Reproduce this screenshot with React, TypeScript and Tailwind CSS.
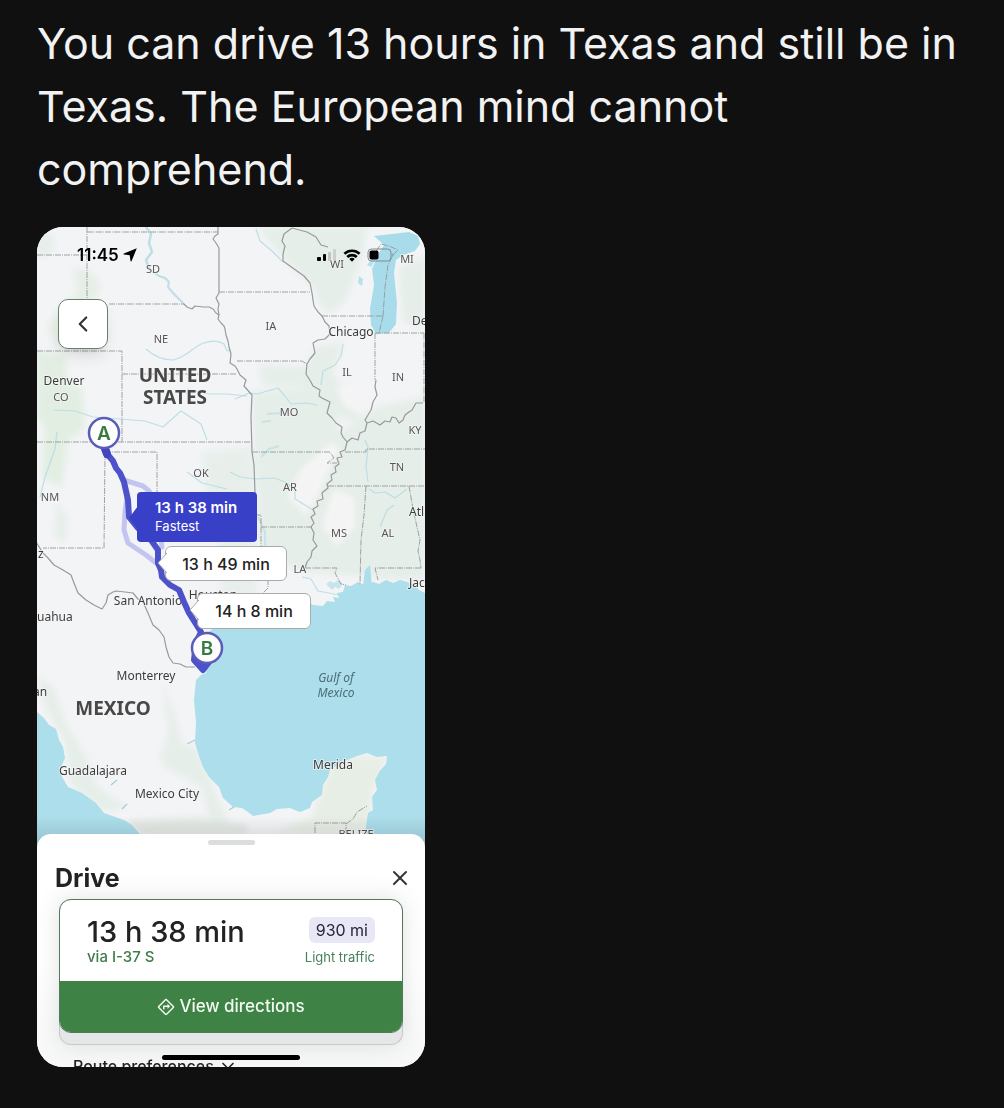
import { ChevronDown, ChevronLeft, X } from "lucide-react";
import { MdOutlineDirections } from "react-icons/md";

type Label = { x: number; y: number; text: string; kind?: "state" | "country" | "sea" | "edge" };

const labels: Label[] = [
  { x: 116, y: 46, text: "SD", kind: "state" },
  { x: 124, y: 116, text: "NE", kind: "state" },
  { x: 300, y: 41, text: "WI", kind: "state" },
  { x: 370, y: 36, text: "MI", kind: "state" },
  { x: 234, y: 103, text: "IA", kind: "state" },
  { x: 310, y: 149, text: "IL", kind: "state" },
  { x: 361, y: 154, text: "IN", kind: "state" },
  { x: 24, y: 174, text: "CO", kind: "state" },
  { x: 252, y: 189, text: "MO", kind: "state" },
  { x: 378, y: 207, text: "KY", kind: "state" },
  { x: 164, y: 250, text: "OK", kind: "state" },
  { x: 360, y: 244, text: "TN", kind: "state" },
  { x: 253, y: 264, text: "AR", kind: "state" },
  { x: 13, y: 274, text: "NM", kind: "state" },
  { x: 302, y: 310, text: "MS", kind: "state" },
  { x: 351, y: 310, text: "AL", kind: "state" },
  { x: 263, y: 346, text: "LA", kind: "state" },
  { x: 319, y: 611, text: "BELIZE", kind: "state" },
  { x: 138, y: 155, text: "UNITED", kind: "country" },
  { x: 138, y: 177, text: "STATES", kind: "country" },
  { x: 76, y: 488, text: "MEXICO", kind: "country" },
  { x: 299, y: 455, text: "Gulf of", kind: "sea" },
  { x: 299, y: 470, text: "Mexico", kind: "sea" },
  { x: 27, y: 158, text: "Denver" },
  { x: 314, y: 109, text: "Chicago" },
  { x: 111, y: 378, text: "San Antonio" },
  { x: 176, y: 372, text: "Houston" },
  { x: 109, y: 453, text: "Monterrey" },
  { x: 56, y: 548, text: "Guadalajara" },
  { x: 130, y: 571, text: "Mexico City" },
  { x: 296, y: 542, text: "Merida" },
  { x: 375, y: 98, text: "De", kind: "edge" },
  { x: 372, y: 289, text: "Atl", kind: "edge" },
  { x: 372, y: 360, text: "Jac", kind: "edge" },
  { x: 1, y: 331, text: "z", kind: "edge" },
  { x: 0, y: 394, text: "uahua", kind: "edge" },
  { x: -4, y: 469, text: "an", kind: "edge" },
];

const labelStyles = {
  city: "fill-[#3c3c3c] text-[12px]",
  edge: "fill-[#3c3c3c] text-[12px]",
  state: "fill-[#555] text-[11px]",
  country: "fill-[#484848] text-[19px] font-bold",
  sea: "fill-[#4d6d78] text-[12px] italic",
};

const borders = [
  "M50 5H181M50 0V72M0 28H50M72 77H147M182 65H273M0 124H85V215M85 147H200M0 215H215",
  "M68 225H120V265M68 225L67 321H6M285 89H346M338 106H387M338 106V153M387 106V176",
  "M200 134H265L270 137M215 225H293L297 231L290 236H300M308 225H329V222H388M291 259H388",
  "M329 259L327 288L324 313L323 358M372 259L376 282L380 300L383 313L381 324L383 333L384 341",
  "M218 288H224V339L231 351V361L224 368M224 300H275M268 341H300L298 346L304 357L309 358M384 341H338L341 353",
  "M278 606V596H309V606M309 597L316 592L320 585L330 579",
  "M346 89L348 60L351 38L356 28L361 23L352 19L344 17L338 26M346 89L342 106",
];

const rivers = [
  "M147 77L150 80L155 82L158 79L166 80L172 80L176 82L179 86L182 88L181 92L184 96L187 99L188 102L189 108L191 114L192 120L194 127L193 136L198 139L200 142L203 148L209 153L207 159L215 168L214 190L215 225L217 238L218 266",
  "M181 0V7L178 9L176 12L179 16L182 21V66L179 71L182 77L181 82L182 88",
  "M255 1L247 7L245 14L248 19L246 27L246 34L253 39L260 44L267 49L273 56L275 66L276 73L277 79L281 85L285 89L288 95L292 99L293 107L288 112L281 113L276 116L278 126L273 132L270 137L269 147L274 155L276 159L283 163L282 169L285 171L293 175L290 186L295 191L299 196L305 200L304 206L306 210L310 215L308 223L303 225L305 230L300 231L302 237L298 240L299 245L294 248L295 253L290 257L291 261L285 266L286 272L280 274L281 279L276 282L278 287L274 290L277 296L274 300L277 306L276 313L280 319L275 324L274 330L270 335L268 341",
  "M310 215L315 211L321 213L323 206L328 204L330 196L328 193L334 183L336 175L340 168L338 160L339 153M330 196L336 194L343 198L348 194L353 195L355 190L359 191L362 196L366 193L368 188L372 185L375 183L379 176L386 176",
  "M255 1L270 5L279 10L284 18L291 20",
  "M-1 315L6 326L11 331L17 338L26 343L34 348L37 356L41 366L49 373L57 378L65 382L69 376L71 368L76 365L79 364L88 365L96 366L101 372L106 375L111 386L116 398L122 403L127 410L129 420L132 430L136 436L143 437L149 440L158 440",
];

function MapCanvas() {
  return (
    <svg
      viewBox="0 0 388 620"
      className="block w-full bg-[#f3f4f6]"
      style={{ fontFamily: '"Noto Sans", sans-serif' }}
      role="img"
      aria-label="Map of the route"
    >
      <defs>
        <filter id="soft" x="-20%" y="-20%" width="140%" height="140%">
          <feGaussianBlur stdDeviation="3" />
        </filter>
        <linearGradient id="fade" x1="0" y1="0" x2="0" y2="1">
          <stop offset="0" stopColor="#000" stopOpacity="0" />
          <stop offset="1" stopColor="#000" stopOpacity="0.14" />
        </linearGradient>
      </defs>

      {/* vegetation */}
      <g fill="#e5eee8" filter="url(#soft)">
        <path d="M220 0L330 0L325 30L308 75L292 86L285 80L276 60L250 35ZM362 40L388 30V100L366 95Z" />
        <path d="M215 165L280 160L295 175L303 205L340 180L388 170V355L330 350L270 345L225 330L220 260Z" />
        <path d="M222 138L268 140L278 120L308 115L295 145L310 165L325 195L300 190L275 160L225 158Z" />
        <path d="M165 225L215 220L220 370L185 368L180 310L168 260Z" opacity=".8" />
        <path d="M0 124L28 128L30 155L45 162L48 200L30 215L25 260L5 250L8 200L0 190Z" fill="#e1eee1" />
        <path d="M36 40L55 45L64 60L55 76L62 90L70 110L55 124L20 120L10 100L25 80L40 65Z" fill="#e6eee5" />
        <path d="M0 5L15 8L18 20L8 30L0 28Z" />
        <path d="M20 275L30 290L28 315L18 310ZM0 450L16 460L30 500L50 530L60 560L90 580L70 585L35 560L28 515L8 480Z" />
        <path d="M122 522L158 518L180 570L192 595L175 605L165 560L128 540ZM125 455L135 480L148 525L128 520L132 500Z" />
        <path d="M286 560L300 540L345 532L335 560L330 606H240L275 590Z" fill="#e7eee5" />
        <path d="M300 530L350 530L335 565L332 606H278L286 560Z" fill="#e7eee5" />
        <path d="M88 594L160 590L210 598L210 607H105Z" fill="#e4e9e4" />
      </g>
      <g fill="#f4f4f5" filter="url(#soft)">
        <path d="M295 215L303 220L280 270L270 290L250 270L265 240Z" />
        <path d="M296 262L318 270L318 300L300 320L285 300ZM298 160L328 156L322 185L308 180Z" />
      </g>

      {/* sea */}
      <path
        className="fill-[#acdeeb]"
        d="M388 366L382 363L378 358L370 355L363 353L356 356L349 353L342 357L336 355L330 358L325 357L321 355L314 359L308 358L306 365L300 366L302 371L296 370L298 375L290 374L286 379L276 378L270 374L250 371L225 372L200 382L182 397L170 406L172 430L169 446L164 448L159 453L158 463L157 473L159 495L158 516L162 529L166 540L172 550L182 560L186 571L196 580L205 581L211 585L216 589L233 586L240 582L253 581L263 585L273 581L275 575L285 568L286 558L291 550L293 543L305 535L320 529L330 526L340 530L350 529L349 537L342 545L338 553L340 563L335 570L336 583L331 586L328 606V620H388Z"
      />
      <path
        className="fill-[#acdeeb]"
        d="M0 485L7 491L12 498L19 502L22 513L26 520L28 531L24 540L24 548L31 560L45 566L59 576L67 586L87 593L95 598L102 606V620H0Z"
      />
      <path
        className="fill-[#a9dcea]"
        d="M337 9L355 7L372 5L381 9L383 17L378 24L366 28L359 33L357 46L360 76L359 97L352 106L339 107L334 98L333 82L337 58L335 42L342 26L347 18Z"
      />
      <path className="fill-[#b8e1eb]" d="M322 49L326 52L325 59L321 56ZM330 38L338 27L341 29L334 40Z" />
      <path className="fill-[#acdeeb]" d="M328 343L333 338L335 359H326Z" />
      <path d="M289 357L293 354L297 356L301 353L306 357L302 362L298 360L295 363Z" className="fill-[#c6e5ec]" />

      {/* streams */}
      <g fill="none" stroke="#b5dbe2" strokeWidth="1.2" strokeLinejoin="round" opacity=".85">
        <path d="M109 0L114 7L112 16L115 25L109 33L112 42" strokeWidth="2.5" />
        <path d="M112 42L122 49L128 51L132 55L131 60L137 67L147 77" strokeWidth="2" />
        <path d="M109 122Q121 133 136 133C150 130 158 118 167 116Q179 112 187 117L190 124L194 123" />
        <path d="M17 183L38 184L56 190L83 192L108 194L126 200L144 184L164 197L170 213" />
        <path d="M198 172L212 166L221 167L227 165L241 161L247 168L254 177L270 176L280 178M150 162L172 167L190 167L210 169" />
        <path d="M193 245L203 250L218 252L238 251L250 256L258 263L258 272L276 283M150 245L165 256L190 262" />
        <path d="M219 2L223 14L235 24L246 35M306 117L304 129L298 138L286 144L284 158" />
        <path d="M20 205L18 222L8 250L3 270M328 213L331 220L329 240L331 255" />
        <path d="M332 262L338 266L348 265L358 271L370 262M343 300L350 283L357 278M265 350L274 352L281 364L302 368" />
        <path d="M230 187L245 186M225 195L234 194M224 230L232 222L242 219M221 290L228 305L228 330" strokeWidth="2.2" opacity=".7" />
        <path d="M74 558L80 553M85 582L90 577M61 546H72M150 517L158 513M192 583L197 580" stroke="#9cc6cc" />
      </g>

      <g fill="none" stroke="#929396" strokeWidth="1" strokeDasharray="6 1 1 1" opacity=".85">
        {borders.map((d) => (
          <path key={d} d={d} />
        ))}
      </g>
      <g fill="none" stroke="#98999c" strokeWidth="1.2" strokeLinejoin="round">
        {rivers.map((d) => (
          <path key={d} d={d} />
        ))}
      </g>

      <g stroke="#f5f5f5" strokeWidth="2" paintOrder="stroke" strokeLinejoin="round">
        {labels.map(({ x, y, text, kind }) => (
          <text
            key={text}
            x={x}
            y={y}
            textAnchor={kind === "edge" ? "start" : "middle"}
            className={labelStyles[kind ?? "city"]}
            strokeOpacity={kind === "sea" ? 0 : 0.7}
          >
            {text}
          </text>
        ))}
      </g>

      {/* alternative routes, then the selected one */}
      <g fill="none" strokeLinecap="round" strokeLinejoin="round">
        <g stroke="#c3c5f0" strokeWidth="5">
          <path d="M87 253L106 259L112 264L118 275L122 300L125 320" />
          <path d="M90 270L88 285L87 303L91 316L100 322L109 328L119 336" />
        </g>
        <path
          d="M67 216L71 228L76 234L79 241L83 246L87 255L89 264L91 273L92 290L100 300L114 313L121 323L121 336L124 343L125 350L133 358L142 363L147 375L152 386L164 405L159 416L157 433L166 443L172 435"
          stroke="#4d52ca"
          strokeWidth="6"
        />
        <path d="M67 219L70 227" stroke="#4145c0" strokeWidth="8" />
        <path d="M160 435L166 441L171 435" stroke="#4d52ca" strokeWidth="7" />
      </g>
      {[
        { name: "A", x: 67, y: 206 },
        { name: "B", x: 170, y: 421 },
      ].map((pin) => (
        <g key={pin.name}>
          <circle cx={pin.x} cy={pin.y} r="15" fill="#fdfdfe" stroke="#5a5db8" strokeWidth="2.5" />
          <text
            x={pin.x}
            y={pin.y + 7}
            textAnchor="middle"
            className="fill-[#377a43] font-[Inter,sans-serif] text-[19px] font-semibold"
          >
            {pin.name}
          </text>
        </g>
      ))}
      <rect y="590" width="388" height="30" fill="url(#fade)" />
    </svg>
  );
}

function StatusBar() {
  return (
    <div className="absolute inset-x-0 top-0 flex items-center justify-between pt-4 pr-[30px] pl-10 text-black">
      <div className="flex items-center gap-1">
        <span className="text-[17px] leading-6 font-semibold">11:45</span>
        <svg viewBox="0 0 14 14" className="size-3.5" fill="currentColor" aria-hidden="true">
          <path d="M13.8.2 8.6 13c-.2.6-1 .5-1.1-.1L6.7 7.3 1 6.5c-.6-.1-.7-.9-.1-1.1Z" />
        </svg>
      </div>
      <div className="flex items-center gap-1.5">
        <svg viewBox="0 0 20 12" className="h-3 w-5" aria-hidden="true">
          <rect x="0" y="8" width="4" height="4" rx="1" />
          <rect x="6" y="5" width="3" height="7" rx="1" />
          <rect x="11" y="3" width="3" height="9" rx="1" fill="#bfc3c2" />
          <rect x="16" y="0" width="3" height="12" rx="1" fill="#ccd1ce" />
        </svg>
        <svg viewBox="0 0 18 13" className="h-[13px] w-[18px]" fill="none" stroke="currentColor" strokeWidth="2.6" aria-hidden="true">
          <path d="M1.4 4.8a11 11 0 0 1 15.2 0M4.2 8a7 7 0 0 1 9.6 0" />
          <path d="M6.3 10a4 4 0 0 1 5.4 0L9 12.8Z" fill="currentColor" stroke="none" />
        </svg>
        <svg viewBox="0 0 28 14" className="h-3.5 w-7" aria-hidden="true">
          <rect x="1" y="1" width="23" height="12" rx="3.5" fill="none" stroke="#7f8a8e" />
          <rect x="2.5" y="2.5" width="9" height="9" rx="2" />
          <path d="M25.5 5v4c1.3-.5 1.3-3.5 0-4Z" fill="#7f8a8e" />
        </svg>
      </div>
    </div>
  );
}

function RouteTag({ time, className }: { time: string; className: string }) {
  return (
    <button
      type="button"
      className={`absolute rounded-md border border-[#a9abad] bg-white text-[16px] font-medium text-[#222] ${className}`}
    >
      <svg viewBox="0 0 10 20" className="absolute top-[6px] -left-[9px] h-5 w-2.5" aria-hidden="true">
        <path d="M10 0L1 10L10 20" fill="#fff" stroke="#a9abad" />
      </svg>
      {time}
    </button>
  );
}

export default function App() {
  return (
    <main className="min-h-screen bg-[#101010] px-[37px] pt-3 pb-[41px] font-[Inter,sans-serif]">
      <p className="mb-[26px] text-[43px] leading-[63px] text-[#f2f2f2]">
        You can drive 13 hours in Texas and still be in Texas. The European mind cannot comprehend.
      </p>

      <section className="relative aspect-[388/840] w-full max-w-[388px] overflow-hidden rounded-[26px] bg-white">
        <div className="relative">
          <MapCanvas />
          <StatusBar />
          <button
            type="button"
            aria-label="Back"
            className="absolute top-[72px] left-[21px] flex size-[50px] items-center justify-center rounded-[10px] border border-[#66806c] bg-white text-[#333] shadow-lg"
          >
            <ChevronLeft size={26} strokeWidth={2} />
          </button>
          <button
            type="button"
            className="absolute top-[265px] left-[100px] h-[50px] w-[120px] rounded bg-[#3940c8] pl-[18px] text-left text-white"
          >
            <svg viewBox="0 0 9 24" className="absolute top-[14px] -left-2 h-6 w-[9px]" aria-hidden="true">
              <path d="M9 0L0 12L9 24Z" fill="#3940c8" />
            </svg>
            <span className="block text-[15px] leading-[18px] font-semibold">13 h 38 min</span>
            <span className="block text-[13px] leading-[18px]">Fastest</span>
          </button>
          <RouteTag time="13 h 49 min" className="top-[319px] left-[128px] h-[35px] w-[122px]" />
          <RouteTag time="14 h 8 min" className="top-[366px] left-[160px] h-[36px] w-[114px]" />
        </div>

        <div className="relative -mt-[13px] rounded-t-[14px] bg-linear-to-b from-white from-50% to-[#f4f5f5] pt-1.5 pb-6">
          <div className="mx-auto h-[5px] w-[47px] rounded-full bg-[#dcdddd]" />
          <div className="flex items-center justify-between pt-[17px] pr-[13px] pb-[5px] pl-[18px]">
            <h2 className="text-[25px] leading-8 font-bold text-[#222]">Drive</h2>
            <button type="button" aria-label="Close" className="text-[#333]">
              <X size={24} strokeWidth={2} />
            </button>
          </div>

          <div className="mx-[22px] rounded-xl border border-t-0 border-[#c6c8c9] bg-[#e4e6e7] pb-[11px] shadow-[0_0_24px_rgba(60,80,70,0.16)]">
            <div className="-mx-px overflow-hidden rounded-xl border border-[#52795a] bg-white">
              <div className="flex justify-between px-[27px] pt-[17px] pb-[14px]">
                <div>
                  <p className="text-[29px] leading-[30px] font-medium text-[#222]">13 h 38 min</p>
                  <p className="text-[15px] leading-5 font-medium text-[#3f7d49]">via I-37 S</p>
                </div>
                <div className="flex flex-col items-end">
                  <span className="rounded-md bg-[#e8e7f6] px-[7px] text-[16px] leading-[26px] text-[#25253c]">930 mi</span>
                  <span className="mt-1 text-[13px] leading-5 text-[#48815a]">Light traffic</span>
                </div>
              </div>
              <button
                type="button"
                className="flex h-[51px] w-full items-center justify-center gap-1 bg-[#3f8246] text-[17px] font-medium text-[#f2faef]"
              >
                <MdOutlineDirections size={18} />
                View directions
              </button>
            </div>
          </div>

          <button type="button" className="mt-[9px] ml-[36px] flex items-center gap-1 text-[16px] leading-6 font-medium text-[#222]">
            Route preferences
            <ChevronDown size={20} />
          </button>
        </div>
        <div className="absolute bottom-[7px] left-1/2 h-[5px] w-[138px] -translate-x-1/2 rounded-full bg-black" />
      </section>
    </main>
  );
}
